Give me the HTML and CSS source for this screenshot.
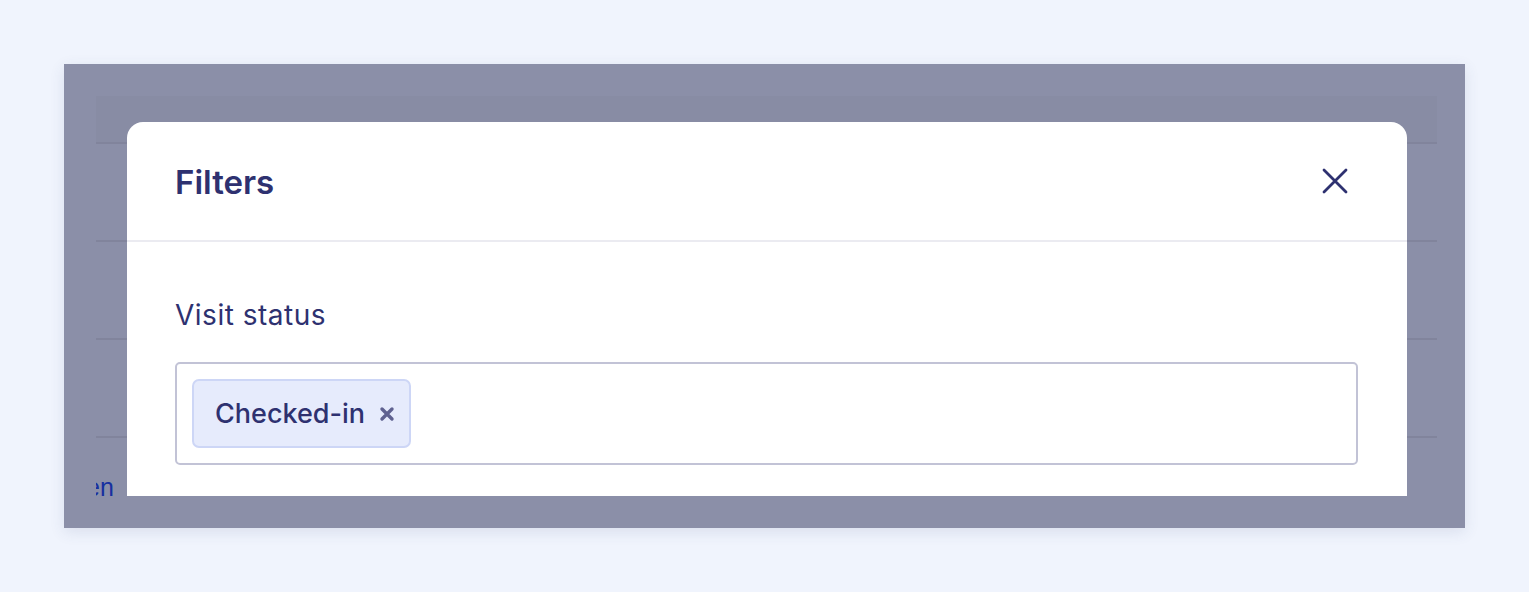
FILE: index.html
```html
<!DOCTYPE html>
<html lang="en">
<head>
<meta charset="utf-8">
<title>Filters</title>
<link rel="stylesheet" href="styles.css">
</head>
<body>
<div class="frame">
  <div class="table">
    <div class="thead"></div>
    <div class="row"></div>
    <div class="row"></div>
    <div class="row"></div>
    <div class="foot"><a class="link">en</a></div>
  </div>
  <div class="modal">
    <div class="modal-head">
      <h2 class="title">Filters</h2>
      <button class="close" aria-label="Close">
        <svg width="26" height="26" viewBox="0 0 26 26"><path d="M2 2L24 24M24 2L2 24" stroke="#2e3170" stroke-width="2.8" stroke-linecap="round" fill="none"/></svg>
      </button>
    </div>
    <div class="modal-body">
      <div class="label">Visit status</div>
      <div class="select">
        <span class="chip">Checked-in
          <svg class="chip-x" width="16" height="16" viewBox="0 0 16 16"><path d="M3 3L13 13M13 3L3 13" stroke="#5f6190" stroke-width="3.4" stroke-linecap="round" fill="none"/></svg>
        </span>
      </div>
    </div>
  </div>
</div>
</body>
</html>
```
FILE: styles.css
```css
html, body {
  margin: 0;
  padding: 0;
}
body {
  background: #f0f4fd;
  padding: 64px;
  font-family: Inter, "Liberation Sans", sans-serif;
  color: #2e3170;
}
.frame {
  position: relative;
  width: 1401px;
  height: 464px;
  background: #8b8fa8;
  box-shadow: 0 4px 14px rgba(60, 70, 120, 0.12);
  padding: 32px 28px 32px 32px;
  box-sizing: border-box;
  overflow: hidden;
}
.table {
  display: flex;
  flex-direction: column;
}
.thead {
  height: 46px;
  background: #888ca4;
  border-bottom: 2px solid #81849c;
}
.row {
  height: 96px;
  border-bottom: 2px solid #81849c;
}
.foot {
  padding-top: 34px;
  overflow: hidden;
  height: 40px;
}
.link {
  display: block;
  font-family: "Liberation Sans", Arial, sans-serif;
  font-size: 25px;
  line-height: 30px;
  color: #1730a0;
  margin-left: -10px;
}
.modal {
  position: absolute;
  left: 63px;
  top: 58px;
  width: 1280px;
  height: 374px;
  background: #fff;
  border-radius: 16px 16px 0 0;
  overflow: hidden;
}
.modal-head {
  height: 118px;
  border-bottom: 2px solid #ebebf1;
  display: flex;
  align-items: center;
  justify-content: space-between;
  padding: 0 59px 0 48px;
}
.title {
  margin: 0;
  font-size: 33px;
  font-weight: 600;
  color: #2e3170;
  letter-spacing: 0;
  padding-top: 2px;
}
.close {
  background: none;
  border: 0;
  padding: 0;
  width: 26px;
  height: 26px;
  display: flex;
  cursor: pointer;
}
.modal-body {
  padding: 56px 49px 0 48px;
}
.label {
  font-size: 28px;
  font-weight: 400;
  line-height: 34px;
  letter-spacing: 0.5px;
  color: #2e3170;
}
.select {
  margin-top: 30px;
  height: 103px;
  border: 2px solid #c2c3d6;
  border-radius: 5px;
  box-sizing: border-box;
  padding: 15px;
  display: flex;
  align-items: flex-start;
}
.chip {
  display: inline-flex;
  align-items: center;
  gap: 14px;
  height: 69px;
  box-sizing: border-box;
  padding: 0 14px 0 21px;
  background: #e6ebfc;
  border: 2px solid #cdd6f6;
  border-radius: 7px;
  font-size: 27px;
  font-weight: 500;
  color: #2e3170;
}
.chip-x {
  display: block;
}
```
